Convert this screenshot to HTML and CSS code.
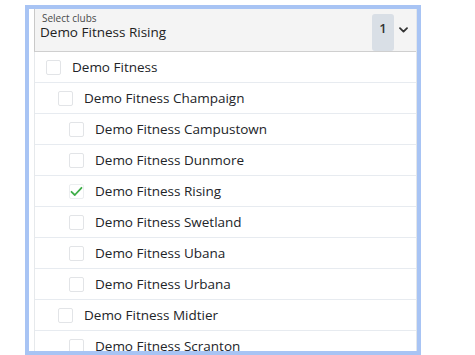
FILE: index.html
```html
<!DOCTYPE html>
<html>
<head>
<meta charset="utf-8">
<link rel="stylesheet" href="styles.css">
</head>
<body>
<div class="frame">
  <div class="panel">
    <div class="header">
      <div class="values">
        <div class="label">Select clubs</div>
        <div class="value">Demo Fitness Rising</div>
      </div>
      <div class="badge">1</div>
      <svg class="chev" width="9" height="6" viewBox="0 0 9 6"><path d="M1 1.2 L4.5 4.6 L8 1.2" fill="none" stroke="#333" stroke-width="1.8" stroke-linecap="round" stroke-linejoin="round"/></svg>
    </div>
    <ul class="list">
      <li class="row l1"><span class="box"></span><span class="name">Demo Fitness</span></li>
      <li class="row l2"><span class="box"></span><span class="name">Demo Fitness Champaign</span></li>
      <li class="row l3"><span class="box"></span><span class="name">Demo Fitness Campustown</span></li>
      <li class="row l3"><span class="box"></span><span class="name">Demo Fitness Dunmore</span></li>
      <li class="row l3"><span class="box checked"><svg width="13" height="11" viewBox="0 0 13 11"><path d="M1.5 5.8 L4.8 9 L11.5 1.8" fill="none" stroke="#3fae49" stroke-width="1.8" stroke-linecap="round" stroke-linejoin="round"/></svg></span><span class="name">Demo Fitness Rising</span></li>
      <li class="row l3"><span class="box"></span><span class="name">Demo Fitness Swetland</span></li>
      <li class="row l3"><span class="box"></span><span class="name">Demo Fitness Ubana</span></li>
      <li class="row l3"><span class="box"></span><span class="name">Demo Fitness Urbana</span></li>
      <li class="row l2"><span class="box"></span><span class="name">Demo Fitness Midtier</span></li>
      <li class="row l3"><span class="box"></span><span class="name">Demo Fitness Scranton</span></li>
    </ul>
  </div>
</div>
</body>
</html>
```

FILE: styles.css
```css
html, body {
  margin: 0;
  padding: 0;
  background: #ffffff;
}
body {
  font-family: "Open Sans", "Liberation Sans", sans-serif;
  color: #222428;
}
.frame {
  margin: 5px 0 0 25px;
  width: 383px;
  height: 342px;
  border: 4px solid #a8c4f4;
  background: #ffffff;
  overflow: hidden;
  padding-left: 5px;
  box-sizing: content-box;
}
.panel {
  border-right: 1px solid #e3e6ea;
  height: 100%;
  box-sizing: border-box;
}
.header {
  display: flex;
  align-items: center;
  height: 43px;
  box-sizing: border-box;
  background: #f4f4f4;
  border-left: 1px solid #c9c9c9;
  border-bottom: 1px solid #cfcfcf;
  padding: 0 8px 0 5px;
}
.values {
  flex: 1;
  display: flex;
  flex-direction: column;
  margin-top: -9px;
}
.label {
  font-size: 10px;
  line-height: 12px;
  color: #4a4a4a;
  padding-left: 2px;
}
.value {
  font-size: 13.5px;
  line-height: 16px;
  color: #222;
}
.badge {
  width: 22px;
  height: 37px;
  margin-top: 4px;
  background: #d9dfe6;
  border-radius: 3px;
  display: flex;
  align-items: center;
  justify-content: center;
  font-size: 13px;
  font-weight: 600;
  color: #333;
  padding-bottom: 9px;
  box-sizing: border-box;
}
.chev {
  margin-left: 5px;
  margin-top: -1px;
}
.list {
  list-style: none;
  margin: 0;
  padding: 0;
  border-left: 1px solid #e6e9ec;
}
.row {
  display: flex;
  align-items: center;
  height: 31px;
  box-sizing: border-box;
  border-bottom: 1px solid #e7ebf0;
  font-size: 13.5px;
}
.l1 { padding-left: 11px; }
.l2 { padding-left: 23px; }
.l3 { padding-left: 34px; }
.box {
  width: 15px;
  height: 15px;
  box-sizing: border-box;
  border: 1px solid #e2e4e7;
  border-radius: 2px;
  margin-right: 11px;
  display: flex;
  align-items: center;
  justify-content: center;
  flex: none;
}
.box.checked {
  border-color: #eceef0;
}
.name {
  color: #222428;
}
```
